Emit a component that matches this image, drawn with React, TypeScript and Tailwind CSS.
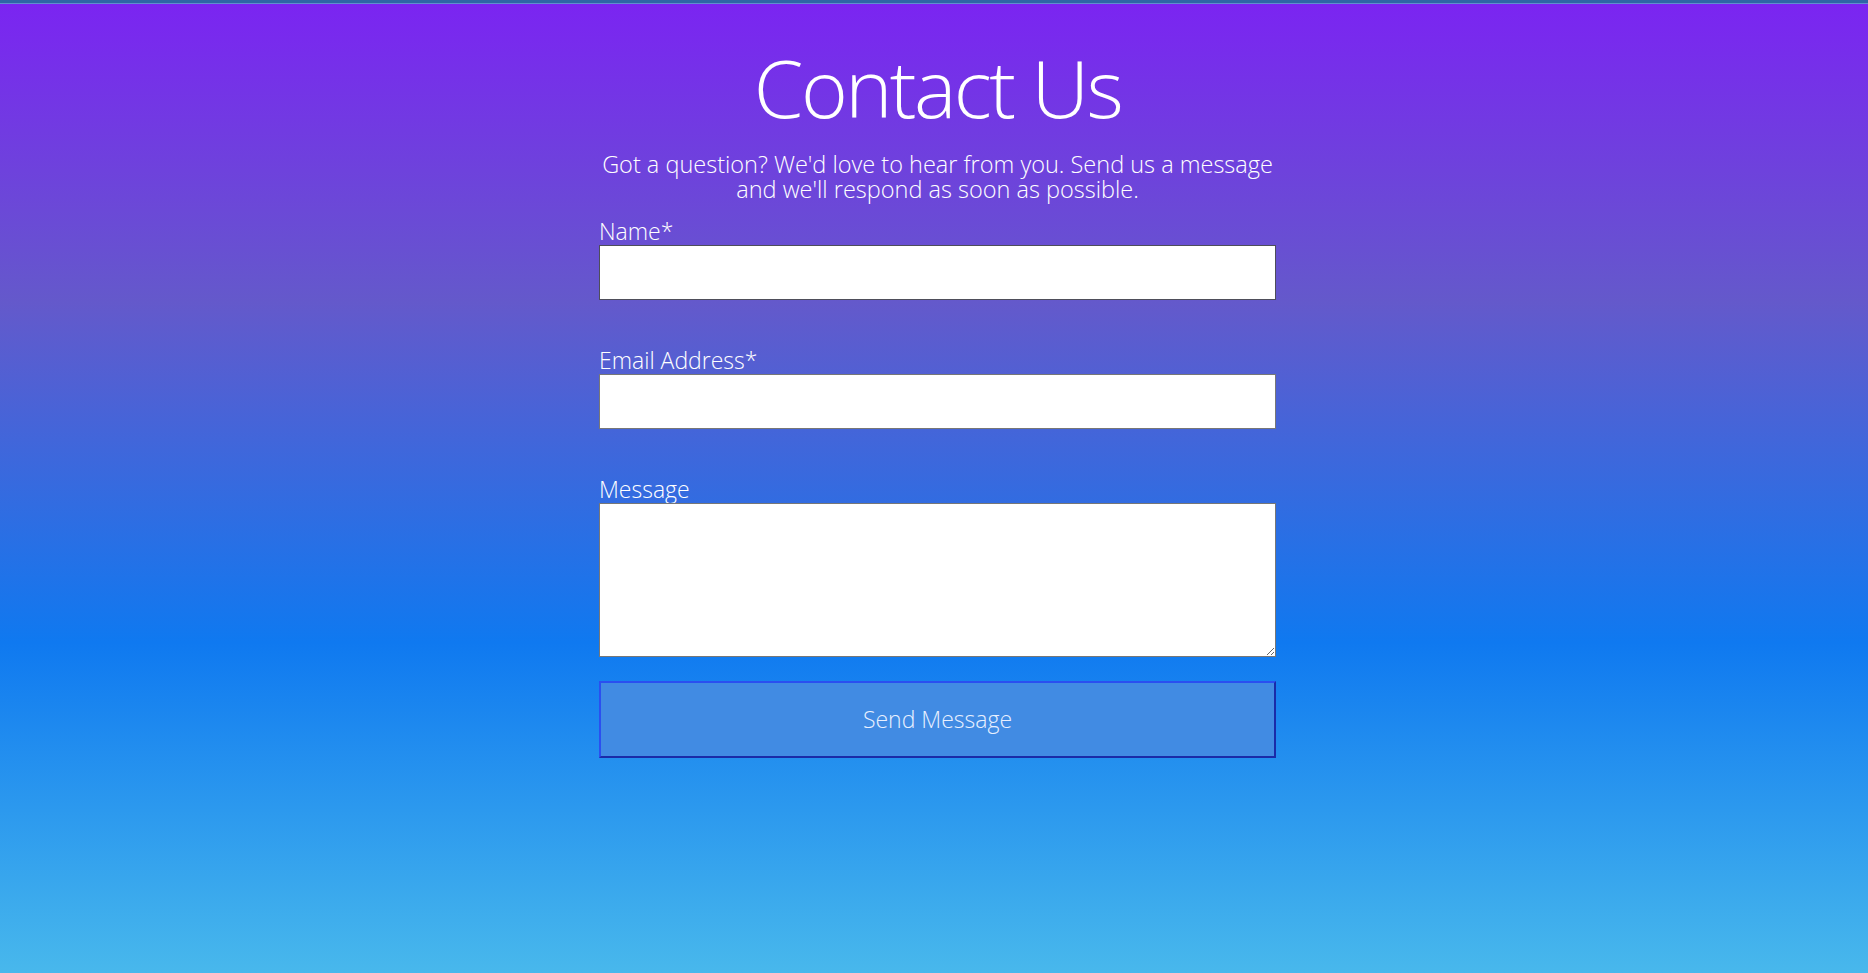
import React from "react";

export default function App() {
  return (
    <div className="min-h-[973px] w-full bg-[linear-gradient(to_bottom,#7b24f2_0%,#6459cb_31%,#0f79f0_66%,#48b8ec_100%)] font-['Open_Sans',sans-serif] font-light text-white">
      <div className="h-[3px] bg-[#2f66a6]" />
      <div className="h-px bg-[#5f8fd0]" />
      <div className="flex justify-center pl-[7px] pt-[35px]">
        <div className="w-[677px]">
          <h1 className="text-center text-[80px] leading-[96px] font-light tracking-[-2.6px]">Contact Us</h1>
          <p className="mt-[17px] text-center text-[23.5px] leading-[25px]">
            Got a question? We'd love to hear from you. Send us a message and we'll respond as soon as possible.
          </p>
          <form className="mt-[15px] flex flex-col" onSubmit={(e) => e.preventDefault()}>
            <label className="block text-[23px] leading-[28px]">Name*</label>
            <input type="text" className="block h-[55px] w-full border border-[#4e4e5a] bg-white text-black" />
            <label className="mt-[46px] block text-[23px] leading-[28px]">Email Address*</label>
            <input type="email" className="block h-[55px] w-full border border-[#777] bg-white text-black" />
            <label className="mt-[46px] block text-[23px] leading-[28px]">Message</label>
            <textarea className="block h-[154px] w-full border border-[#777] bg-white text-black" />
            <button
              type="submit"
              className="mt-[24px] h-[77px] w-full border-2 border-t-[#2a4ff0] border-l-[#2a4ff0] border-b-[#1a2ba8] border-r-[#1a2ba8] bg-[#418be3] text-[23px] font-light text-[#e8f0ff]"
            >
              Send Message
            </button>
          </form>
        </div>
      </div>
    </div>
  );
}
